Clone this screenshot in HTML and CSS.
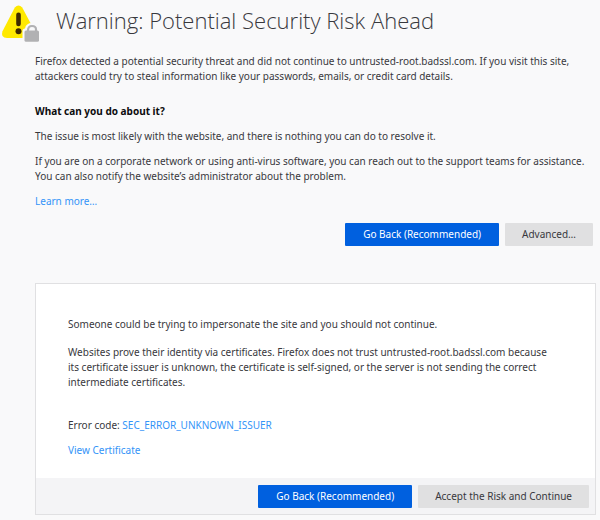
FILE: index.html
```html
<!DOCTYPE html>
<html lang="en">
<head>
<meta charset="utf-8">
<title>Warning: Potential Security Risk Ahead</title>
<meta name="viewport" content="width=device-width, initial-scale=1">
<link rel="stylesheet" href="styles.css">
</head>
<body>
<main class="page">
  <header class="heading">
    <svg class="warning-icon" viewBox="0 0 40 42" width="40" height="42" aria-hidden="true">
      <path fill="#ffe900" d="M14.8 7.6Q18.5 3.2 22.2 7.6L35 31.5Q37 38 30 38H7Q.5 38 2.4 31.5Z"/>
      <path fill="none" stroke="#3e2800" stroke-width="4.6" stroke-linecap="round" d="M18.5 14.7V24"/>
      <circle cx="18.5" cy="31.2" r="3" fill="#3e2800"/>
      <path fill="#f9f9fa" d="M25 28.5Q26 23 32 23Q38 23 39.5 29L40 31V42H22.5V31Q22.5 28.5 25 28.5Z"/>
      <path fill="none" stroke="#b1b1b3" stroke-width="2.2" d="M28 31V30.5Q28 26 32 26Q36 26 36 29.5V31"/>
      <rect x="24.5" y="30.5" width="14.5" height="11.2" rx="1.5" fill="#b1b1b3"/>
    </svg>
    <h1 class="title">Warning: Potential Security Risk Ahead</h1>
  </header>
  <section class="summary">
    <p>Firefox detected a potential security threat and did not continue to untrusted-root.badssl.com. If you visit this site, attackers could try to steal information like your passwords, emails, or credit card details.</p>
    <h2 class="subtitle">What can you do about it?</h2>
    <p>The issue is most likely with the website, and there is nothing you can do to resolve it.</p>
    <p>If you are on a corporate network or using anti-virus software, you can reach out to the support teams for assistance. You can also notify the website’s administrator about the problem.</p>
    <p><a href="#learn-more">Learn more…</a></p>
    <div class="actions">
      <button class="button primary" type="button">Go Back (Recommended)</button>
      <button class="button" type="button">Advanced…</button>
    </div>
  </section>
  <section class="panel">
    <div class="details">
      <p>Someone could be trying to impersonate the site and you should not continue.</p>
      <p>Websites prove their identity via certificates. Firefox does not trust untrusted-root.badssl.com because its certificate issuer is unknown, the certificate is self-signed, or the server is not sending the correct intermediate certificates.</p>
      <p class="error-code">Error code: <a href="#error-code">SEC_ERROR_UNKNOWN_ISSUER</a></p>
      <p class="certificate"><a href="#certificate">View Certificate</a></p>
    </div>
    <div class="panel-actions">
      <button class="button primary" type="button">Go Back (Recommended)</button>
      <button class="button" type="button">Accept the Risk and Continue</button>
    </div>
  </section>
</main>
</body>
</html>
```
FILE: styles.css
```css
body {
  margin: 0;
  background: #f9f9fa;
  color: #38383d;
  font: 10px/15px "Noto Sans", "Open Sans", sans-serif;
}

h1, h2, p {
  margin: 0;
}

a {
  color: #3394f8;
  text-decoration: none;
}

.page {
  padding: 0 4px 5px 0;
}

.heading {
  display: flex;
  gap: 16px;
}

.title {
  font-family: "Open Sans", "Noto Sans", sans-serif;
  font-size: 22px;
  line-height: 40px;
  font-weight: 300;
}

.summary {
  padding: 12px 3px 0 35px;
}

.summary p + p {
  margin-top: 10px;
}

.subtitle {
  margin: 20px 0 10px;
  color: #0c0c0d;
  font-size: 10px;
  line-height: 15px;
  font-weight: 700;
}

.actions, .panel-actions {
  display: flex;
  justify-content: flex-end;
  gap: 6px;
}

.actions {
  margin-top: 14px;
}

.button {
  height: 23px;
  padding: 0 17px;
  border: 0;
  border-radius: 1px;
  background: #e0e0e1;
  color: #38383d;
  font: inherit;
}

.primary {
  padding: 0 18px;
  background: #0060df;
  color: #fff;
}

.panel {
  margin: 37px 0 0 35px;
  border: 1px solid #e0e0e2;
  background: #fff;
}

.details {
  padding: 33px 36px 20px 32px;
}

.details p + p {
  margin-top: 13px;
}

.details .error-code {
  margin-top: 28px;
}

.details .certificate {
  margin-top: 10px;
}

.panel-actions {
  padding: 7px 6px 6px;
  background: #f4f4f6;
}
```
